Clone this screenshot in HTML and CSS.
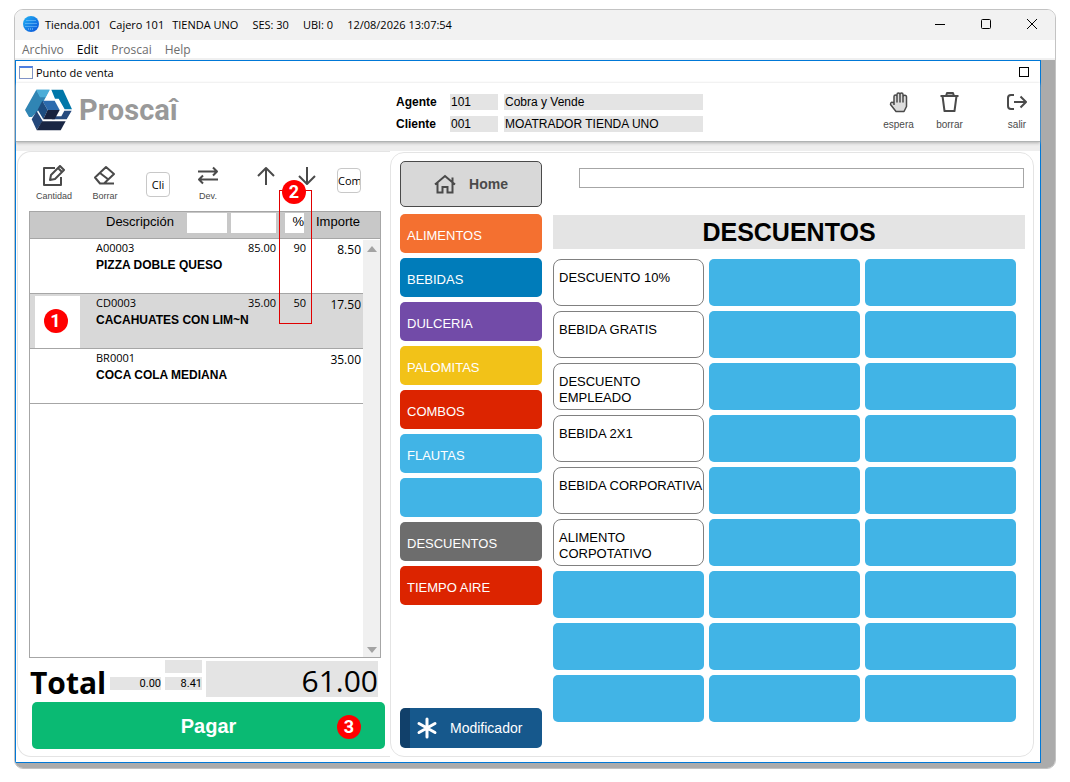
FILE: index.html
```html
<!DOCTYPE html>
<html lang="es">

<head>
    <meta charset="UTF-8">
    <meta name="viewport" content="width=device-width, initial-scale=1.0">
    <title>Punto de venta</title>
    <link rel="stylesheet" href="styles.css">
</head>

<body>
    <div class="window">
        <header class="titlebar">
            <svg class="globe" viewBox="0 0 16 16" width="16" height="16">
                <defs>
                    <linearGradient id="globe-fill" x1="0" y1="0" x2="1" y2="1">
                        <stop offset="0" stop-color="#22b4f5" />
                        <stop offset="1" stop-color="#0a50d8" />
                    </linearGradient>
                </defs>
                <circle cx="8" cy="8" r="8" fill="url(#globe-fill)" />
                <path d="M3.500 4.500h9M2.500 7.500h11M2.500 10.500h11M5 13h6" stroke="#8fd0ff" stroke-width="1" stroke-dasharray="1 1" fill="none" />
            </svg>
            <div class="title-text">
                <span>Tienda.001</span>
                <span>Cajero 101</span>
                <span>TIENDA UNO</span>
                <span class="wide">SES: 30</span>
                <span class="wide">UBI: 0</span>
                <span class="wide">12/08/2026 13:07:54</span>
            </div>
            <div class="window-buttons">
                <button type="button" aria-label="Minimizar"><svg viewBox="0 0 12 12" width="12" height="12"><path d="M1 6.500h10" /></svg></button>
                <button type="button" aria-label="Maximizar"><svg viewBox="0 0 12 12" width="12" height="12"><rect x="1.500" y="1.500" width="9" height="9" rx="1" /></svg></button>
                <button type="button" aria-label="Cerrar"><svg viewBox="0 0 12 12" width="12" height="12"><path d="M1 1l10 10M11 1L1 11" /></svg></button>
            </div>
        </header>

        <nav class="menubar">
            <a href="#">Archivo</a>
            <a href="#" class="active">Edit</a>
            <a href="#">Proscai</a>
            <a href="#">Help</a>
        </nav>

        <div class="workspace">
            <div class="pos">
                <div class="pos-title">
                    <span class="form-icon"></span>
                    <span>Punto de venta</span>
                    <button type="button" class="restore" aria-label="Maximizar"></button>
                </div>

                <div class="pos-header">
                    <div class="logo">
                        <svg viewBox="0 0 144 126" width="48" height="42">
                            <path d="M34 2h40L63 23H46z" fill="#4badd8" />
                            <path d="M46 23h17L42 62 21 84h-9L0 63 34 2z" fill="#3085b4" />
                            <path d="M34 2h40L62 25H45z" fill="#4badd8" />
                            <path d="M79 2h35l27 59h-22L101 29H90z" fill="#0077a9" />
                            <path d="M118 65h22l-15 26H80l9-9h20z" fill="#264a7e" />
                            <path d="M20 91l15-25 18 30-18 27z" fill="#24477a" />
                            <path d="M51 97h71l-15 27H35z" fill="#192644" />
                            <path d="M52 35h37l15 28H68z" fill="#2c6bae" />
                            <path d="M52 35l16 28-13 28-17-29z" fill="#1d4c80" />
                            <path d="M68 63h36L89 91H55z" fill="#17223f" />
                        </svg>
                        <span class="brand">Proscaî</span>
                    </div>
                    <div class="parties">
                        <label for="agente">Agente</label>
                        <input type="text" id="agente" value="101">
                        <input type="text" value="Cobra y Vende" aria-label="Nombre del agente">
                        <label for="cliente">Cliente</label>
                        <input type="text" id="cliente" value="001">
                        <input type="text" value="MOATRADOR TIENDA UNO" aria-label="Nombre del cliente">
                    </div>
                    <div class="actions">
                        <button type="button" class="tool">
                            <svg viewBox="0 0 22 22" width="22" height="22"><path d="M6 12V5.500a1.500 1.500 0 0 1 3 0V11 3.500a1.500 1.500 0 0 1 3 0V11 3.500a1.500 1.500 0 0 1 3 0V11 6a1.500 1.500 0 0 1 3.500 0v9.500L16 20.500H8L2.500 13.500q0-3.500 3.500-1.500v2" /></svg>
                            espera
                        </button>
                        <button type="button" class="tool">
                            <svg viewBox="0 0 22 22" width="22" height="22"><path d="M7 5l1-3h6l1 3z" fill="#bbb" /><path d="M1.500 5h18M3.500 5l2 15h10l2-15" /></svg>
                            borrar
                        </button>
                        <button type="button" class="tool exit">
                            <svg viewBox="0 0 22 22" width="22" height="22"><path d="M8 4H5Q2 4 2 7v8q0 3 3 3h3M8 11h12M14.500 5.500L20 11l-5.500 5.500" /></svg>
                            salir
                        </button>
                    </div>
                </div>

                <main class="panels">
                    <section class="ticket">
                        <div class="toolbar">
                            <button type="button" class="tool">
                                <svg viewBox="0 0 24 22" width="24" height="22"><path d="M13 3H2v17h17v-8M9 10l9-9 4 4-9 9-5 1zM16 3l4 4" /></svg>
                                Cantidad
                            </button>
                            <button type="button" class="tool">
                                <svg viewBox="0 0 24 22" width="24" height="22"><path d="M2 12.500L13 2l8 7-10 9.500H7zM7 8l9 7M10 18.500h11" /></svg>
                                Borrar
                            </button>
                            <button type="button" class="small-button low">Cli</button>
                            <button type="button" class="tool">
                                <svg viewBox="0 0 24 22" width="24" height="22"><path d="M2 6.500h19M17 2.500l4 4-4 4M22 14.500H3M7 10.500l-4 4 4 4" /></svg>
                                Dev.
                            </button>
                            <div class="moves">
                                <button type="button" class="tool" aria-label="Subir"><svg viewBox="0 0 22 22" width="22" height="22"><path d="M11 20V3M3 11l8-8 8 8" /></svg></button>
                                <button type="button" class="tool" aria-label="Bajar"><svg viewBox="0 0 22 22" width="22" height="22"><path d="M11 2v17M3 11l8 8 8-8" /></svg></button>
                                <button type="button" class="small-button">Com</button>
                            </div>
                        </div>

                        <div class="list">
                            <table>
                                <colgroup>
                                    <col class="c-thumb">
                                    <col>
                                    <col class="c-price">
                                    <col class="c-pct">
                                    <col class="c-amount">
                                    <col class="c-scroll">
                                </colgroup>
                                <thead>
                                    <tr>
                                        <th></th>
                                        <th><div class="th-desc">Descripción<span class="blank"></span></div></th>
                                        <th><span class="blank"></span></th>
                                        <th><span class="blank">%</span></th>
                                        <th class="amount">Importe</th>
                                        <th></th>
                                    </tr>
                                </thead>
                                <tbody>
                                    <tr>
                                        <td></td>
                                        <td>A00003<strong>PIZZA DOBLE QUESO</strong></td>
                                        <td class="num">85.00</td>
                                        <td class="num">90</td>
                                        <td class="num amount">8.50</td>
                                        <td></td>
                                    </tr>
                                    <tr class="selected">
                                        <td><div class="thumb"><span class="marker">1</span></div></td>
                                        <td>CD0003<strong>CACAHUATES CON LIM~N</strong></td>
                                        <td class="num">35.00</td>
                                        <td class="num">50</td>
                                        <td class="num amount">17.50</td>
                                        <td></td>
                                    </tr>
                                    <tr>
                                        <td></td>
                                        <td>BR0001<strong>COCA COLA MEDIANA</strong></td>
                                        <td></td>
                                        <td></td>
                                        <td class="num amount">35.00</td>
                                        <td></td>
                                    </tr>
                                </tbody>
                            </table>
                            <div class="scrollbar"><span class="up"></span><span class="down"></span></div>
                            <div class="highlight"><span class="marker">2</span></div>
                        </div>

                        <div class="totals">
                            <span class="total-label">Total</span>
                            <output class="small-total">0.00</output>
                            <div class="tax">
                                <output class="small-total"></output>
                                <output class="small-total">8.41</output>
                            </div>
                            <output class="total-amount">61.00</output>
                        </div>
                        <button type="button" class="pay">Pagar<span class="marker">3</span></button>
                    </section>

                    <section class="catalog">
                        <div class="categories">
                            <button type="button" class="home">
                                <svg viewBox="0 0 22 20" width="22" height="20"><path d="M1 10.500L11 2l10 8.500M3.500 9v9.500h5V13h5v5.500h5V9M18.500 8V3.500" /></svg>
                                Home
                            </button>
                            <button type="button" class="category orange">ALIMENTOS</button>
                            <button type="button" class="category blue">BEBIDAS</button>
                            <button type="button" class="category purple">DULCERIA</button>
                            <button type="button" class="category yellow">PALOMITAS</button>
                            <button type="button" class="category red">COMBOS</button>
                            <button type="button" class="category">FLAUTAS</button>
                            <button type="button" class="category" aria-label="Vacío"></button>
                            <button type="button" class="category gray">DESCUENTOS</button>
                            <button type="button" class="category red">TIEMPO AIRE</button>
                            <button type="button" class="modifier">
                                <svg viewBox="0 0 22 22" width="22" height="22"><path d="M11 2v18M3 6.500l16 9M19 6.500l-16 9" /></svg>
                                Modificador
                            </button>
                        </div>

                        <div class="products">
                            <input type="text" class="search" aria-label="Buscar">
                            <h1>DESCUENTOS</h1>
                            <div class="grid">
                                <button type="button" class="product">DESCUENTO 10%</button>
                                <button type="button" aria-label="Vacío"></button>
                                <button type="button" aria-label="Vacío"></button>
                                <button type="button" class="product">BEBIDA GRATIS</button>
                                <button type="button" aria-label="Vacío"></button>
                                <button type="button" aria-label="Vacío"></button>
                                <button type="button" class="product">DESCUENTO<br>EMPLEADO</button>
                                <button type="button" aria-label="Vacío"></button>
                                <button type="button" aria-label="Vacío"></button>
                                <button type="button" class="product">BEBIDA 2X1</button>
                                <button type="button" aria-label="Vacío"></button>
                                <button type="button" aria-label="Vacío"></button>
                                <button type="button" class="product">BEBIDA CORPORATIVA</button>
                                <button type="button" aria-label="Vacío"></button>
                                <button type="button" aria-label="Vacío"></button>
                                <button type="button" class="product">ALIMENTO<br>CORPOTATIVO</button>
                                <button type="button" aria-label="Vacío"></button>
                                <button type="button" aria-label="Vacío"></button>
                                <button type="button" aria-label="Vacío"></button>
                                <button type="button" aria-label="Vacío"></button>
                                <button type="button" aria-label="Vacío"></button>
                                <button type="button" aria-label="Vacío"></button>
                                <button type="button" aria-label="Vacío"></button>
                                <button type="button" aria-label="Vacío"></button>
                                <button type="button" aria-label="Vacío"></button>
                                <button type="button" aria-label="Vacío"></button>
                                <button type="button" aria-label="Vacío"></button>
                            </div>
                        </div>
                    </section>
                </main>
            </div>
        </div>
    </div>
</body>

</html>
```

FILE: styles.css
```css
* {
    box-sizing: border-box;
}

body {
    display: flex;
    min-height: 100vh;
    margin: 0;
    padding: 9px 14px 13px;
    background-color: #fff;
    font-family: "Liberation Sans", Arial, sans-serif;
    font-size: 13px;
    color: #000;
}

button,
input {
    font-family: inherit;
    font-size: 13px;
    padding: 0;
    border: none;
    border-radius: 0;
    background: none;
    color: inherit;
}

button {
    cursor: pointer;
}

svg {
    display: block;
    flex: none;
}

.window {
    display: flex;
    flex-direction: column;
    flex: 1;
    border: 1px solid #c3c3c3;
    border-radius: 9px;
    overflow: hidden;
}

/* Title bar and menu */
.titlebar {
    display: flex;
    align-items: center;
    height: 30px;
    padding: 0 0 2px 8px;
    background-color: #f2f2f2;
    font-family: "Open Sans", sans-serif;
    font-size: 11px;
}

.title-text {
    display: flex;
    flex: 1;
    gap: 8px;
    margin-left: 6px;
    white-space: nowrap;
}

.title-text .wide {
    margin-left: 6px;
}

.window-buttons {
    display: flex;
}

.window-buttons button {
    display: flex;
    align-items: center;
    justify-content: center;
    width: 46px;
    height: 28px;
}

.window-buttons path,
.window-buttons rect {
    fill: none;
    stroke: #000;
}

.menubar {
    display: flex;
    gap: 13px;
    height: 20px;
    padding-left: 7px;
    border-bottom: 2px solid #f0f0f0;
    font-family: "Open Sans", sans-serif;
    font-size: 12px;
    line-height: 19px;
}

.menubar a {
    color: #6d6d6d;
    text-decoration: none;
}

.menubar .active {
    color: #000;
}

.workspace {
    display: flex;
    flex: 1;
    padding: 0 14px 5px 0;
    background-color: #ababab;
}

.pos {
    display: flex;
    flex-direction: column;
    flex: 1;
    border: 1px solid #0078d7;
    background-color: #fff;
}

.pos-title {
    display: flex;
    align-items: center;
    height: 22px;
    padding: 0 11px 0 3px;
    font-family: "Open Sans", sans-serif;
    font-size: 11px;
}

.form-icon {
    width: 14px;
    height: 13px;
    margin-right: 3px;
    border: 1px solid #8094c4;
    border-top: 2px solid #4f7fe0;
    background-color: #fffff8;
}

.restore {
    width: 10px;
    height: 10px;
    margin-left: auto;
    border: 1px solid #000;
}

/* Logo, agent and client, actions */
.pos-header {
    display: flex;
    position: relative;
    height: 59px;
    padding: 6px 4px 0 9px;
    border-bottom: 1px solid #b0b3b3;
    box-shadow: 0 1px 3px #b0b0b0;
}

.logo {
    display: flex;
    flex: 0 0 372px;
    gap: 6px;
}

.brand {
    font-family: Roboto, sans-serif;
    font-size: 29px;
    font-weight: 700;
    line-height: 43px;
    color: #999;
}

.parties {
    display: grid;
    grid-template-columns: 47px 48px 199px;
    gap: 6px;
    align-content: start;
    padding-top: 5px;
    font-size: 12px;
}

.parties label {
    margin-left: -1px;
    font-weight: 700;
    line-height: 16px;
}

.parties input {
    width: 100%;
    height: 16px;
    padding: 0 1px;
    background-color: #e4e4e4;
    font-size: 12px;
}

.actions {
    display: flex;
    align-items: flex-start;
    margin-left: auto;
}

.tool {
    display: flex;
    flex-direction: column;
    align-items: center;
    gap: 6px;
    font-size: 10px;
    line-height: 12px;
    color: #4a4a4a;
}

.tool svg {
    fill: none;
    stroke: #4a4a4a;
    stroke-width: 2;
    stroke-linejoin: round;
}

.actions .tool {
    width: 51px;
    padding-top: 2px;
}

.actions .tool:first-child svg {
    stroke-width: 1;
    fill: #ddd;
    stroke-width: 1.5px;
}

.actions .exit {
    width: 38px;
    margin-left: 23px;
}

.panels {
    display: flex;
    flex: 1;
    padding: 0 6px 5px 1px;
    border-top: 9px solid #eee;
}

/* Ticket */
.ticket {
    display: flex;
    flex-direction: column;
    flex: 0 0 373px;
    padding: 0 9px 7px 11px;
    border: 1px solid #e4e4e4;
    border-right: none;
    border-radius: 14px 0 0 14px;
}

.toolbar {
    display: grid;
    grid-template-columns: 50px 52px 54px 46px 1fr;
    align-items: start;
    justify-items: center;
    height: 59px;
    padding-top: 13px;
}

.toolbar .tool {
    gap: 3px;
    font-size: 9px;
}

.moves {
    display: flex;
    gap: 19px;
    justify-self: start;
    margin-left: 24px;
}

.small-button {
    width: 24px;
    height: 25px;
    margin-top: 3px;
    border: 1px solid #c8c8c8;
    border-radius: 4px;
    overflow: hidden;
    font-family: "Open Sans", sans-serif;
    font-size: 11px;
    text-align: left;
}

.small-button.low {
    margin-top: 7px;
    text-align: center;
}

.list {
    position: relative;
    flex: 1;
    border: 1px solid #a6a6a6;
}

.list table {
    width: 100%;
    table-layout: fixed;
    border-collapse: separate;
    border-spacing: 0;
    font-family: "Open Sans", sans-serif;
    font-size: 11px;
}

.c-thumb {
    width: 66px;
}

.c-price {
    width: 48px;
}

.c-pct {
    width: 30px;
}

.c-amount {
    width: 55px;
}

.c-scroll {
    width: 18px;
}

.list th {
    height: 27px;
    padding: 1px 0 0;
    border-bottom: 1px solid #a6a6a6;
    background-color: #c8c8c8;
    font-family: "Liberation Sans", sans-serif;
    font-size: 13px;
    font-weight: 400;
    line-height: 18px;
    text-align: left;
    vertical-align: top;
}

.th-desc {
    display: flex;
    justify-content: space-between;
    padding: 0 2px 0 10px;
}

.blank {
    display: block;
    height: 20px;
    margin: 0 1px 0 2px;
    background-color: #fff;
    text-align: right;
}

.th-desc .blank {
    width: 40px;
    margin: 0;
}

th:nth-child(4) .blank {
    margin: 0 3px 0 8px;
}

.list th.amount {
    padding-left: 9px;
}

.list td {
    height: 55px;
    padding: 1px 0 0;
    border-bottom: 1px solid #a6a6a6;
    line-height: 15px;
    vertical-align: top;
    white-space: nowrap;
}

.list strong {
    display: block;
    margin-top: 3px;
    font-family: "Liberation Sans", sans-serif;
    font-size: 12px;
}

.list .num {
    padding-right: 1px;
    text-align: right;
}

.list td.amount {
    padding-top: 3px;
    font-size: 12px;
}

.selected td {
    background-color: #d8d8d8;
}

.thumb {
    display: flex;
    align-items: center;
    justify-content: center;
    width: 45px;
    height: 52px;
    margin: 1px 0 0 5px;
    padding: 0 4px 2px 0;
    background-color: #fff;
}

.marker {
    display: block;
    width: 24px;
    height: 24px;
    border-radius: 50%;
    background-color: #f00;
    color: #fff;
    font-family: Roboto, sans-serif;
    font-size: 18px;
    font-weight: 700;
    line-height: 24px;
    text-align: center;
}

.scrollbar {
    display: flex;
    flex-direction: column;
    justify-content: space-between;
    align-items: center;
    position: absolute;
    top: 28px;
    right: 0;
    bottom: 0;
    width: 17px;
    padding: 6px 0 4px;
    background-color: #f0f0f0;
}

.up,
.down {
    border: 5px solid transparent;
}

.up {
    border-top: none;
    border-bottom: 6px solid #a3a3a3;
}

.down {
    border-bottom: none;
    border-top: 6px solid #a3a3a3;
}

.highlight {
    position: absolute;
    top: -22px;
    left: 249px;
    width: 33px;
    height: 134px;
    border: 1px solid #e00000;
}

.highlight .marker {
    position: absolute;
    top: -11px;
    left: 2px;
}

.totals {
    display: flex;
    align-items: flex-end;
    height: 44px;
    padding: 0 3px 5px 1px;
    font-family: "Open Sans", sans-serif;
}

.total-label {
    width: 80px;
    font-size: 30px;
    font-weight: 700;
    line-height: 28px;
}

.small-total {
    width: 51px;
    height: 13px;
    margin-bottom: 7px;
    background-color: #e4e4e4;
    font-family: Roboto, sans-serif;
    font-size: 11px;
    line-height: 13px;
    text-align: right;
}

.tax {
    display: flex;
    flex-direction: column;
    gap: 4px;
    margin: 0 4px;
}

.tax .small-total {
    width: 37px;
    margin-bottom: 0;
}

.tax .small-total:last-child {
    margin-bottom: 7px;
}

.total-amount {
    flex: 1;
    height: 36px;
    background-color: #e4e4e4;
    font-size: 30px;
    line-height: 40px;
    text-align: right;
}

.pay {
    display: grid;
    grid-template-columns: 1fr auto 1fr;
    align-items: center;
    height: 47px;
    margin: 0 -4px 0 3px;
    padding: 2px 24px 0;
    border-radius: 5px;
    background-color: #0aba73;
    color: #fff;
    font-size: 20px;
    font-weight: 700;
}

.pay::before {
    content: "";
}

.pay .marker {
    justify-self: end;
}

/* Catalog */
.catalog {
    display: flex;
    flex: 1;
    gap: 11px;
    margin-top: 1px;
    padding: 8px 8px 8px 9px;
    border: 1px solid #e4e4e4;
    border-radius: 14px;
}

.categories {
    display: flex;
    flex-direction: column;
    flex: 0 0 142px;
    gap: 5px;
}

.home,
.modifier {
    display: flex;
    align-items: center;
    height: 46px;
    font-size: 14px;
}

.home {
    justify-content: center;
    gap: 13px;
    margin-bottom: 2px;
    border: 1px solid #4a4a4a;
    border-radius: 5px;
    background-color: #d8d8d8;
    color: #4a4a4a;
    font-weight: 700;
}

.home svg {
    fill: none;
    stroke: #4a4a4a;
    stroke-width: 2;
}

.category {
    height: 39px;
    padding: 4px 7px 0;
    border-radius: 5px;
    background-color: #41b4e6;
    color: #fff;
    text-align: left;
}

.orange {
    background-color: #f47030;
}

.blue {
    background-color: #007cba;
}

.purple {
    background-color: #724ba8;
}

.yellow {
    background-color: #f2c218;
}

.red {
    background-color: #dc2400;
}

.gray {
    background-color: #6d6d6d;
}

.modifier {
    gap: 12px;
    height: 40px;
    margin-top: auto;
    padding-left: 6px;
    border-left: 10px solid #11406a;
    border-radius: 5px;
    background-color: #16588c;
    color: #fff;
}

.modifier svg {
    fill: none;
    stroke: #fff;
    stroke-width: 3;
    stroke-linecap: round;
}

.products {
    display: flex;
    flex-direction: column;
    flex: 1;
}

.search {
    height: 20px;
    margin: 7px 1px 27px 26px;
    padding: 0 4px;
    border: 1px solid #a6a6a6;
}

.products h1 {
    margin: 0 0 10px;
    background-color: #e4e4e4;
    font-size: 25px;
    line-height: 34px;
    text-align: center;
}

.grid {
    display: grid;
    grid-template-columns: repeat(3, 1fr);
    grid-auto-rows: 47px;
    gap: 5px;
    padding-right: 9px;
}

.grid button {
    border-radius: 5px;
    background-color: #41b4e6;
}

.grid .product {
    display: flex;
    min-width: 0;
    padding: 10px 0 0 5px;
    border: 1px solid #808080;
    border-radius: 8px;
    background-color: #fff;
    line-height: 16px;
    text-align: left;
    white-space: nowrap;
}
```
